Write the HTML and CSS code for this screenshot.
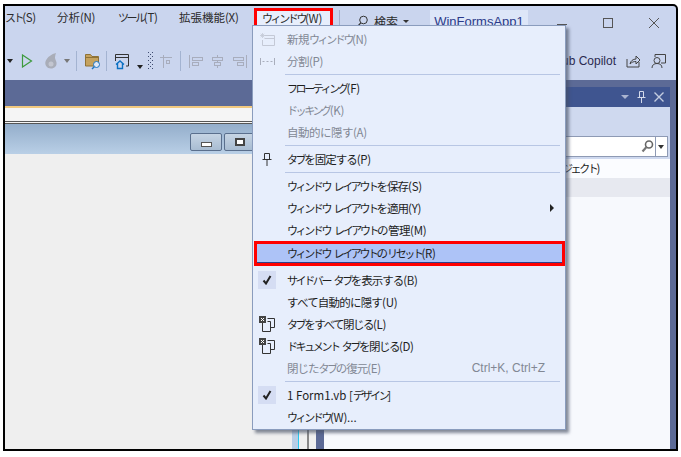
FILE: index.html
```html
<!DOCTYPE html>
<html lang="ja">
<head>
<meta charset="utf-8">
<title>ウィンドウ メニュー</title>
<link rel="stylesheet" href="styles.css">
</head>
<body>
<div class="frame">
  <div class="titlebar">
    <nav class="menubar">
      <span class="mi mi-s"><span class="k">スト</span><span class="ak">(S)</span></span>
      <span class="mi mi-n">分析<span class="ak">(N)</span></span>
      <span class="mi mi-t"><span class="k">ツール</span><span class="ak">(T)</span></span>
      <span class="mi mi-x">拡張機能<span class="ak">(X)</span></span>
      <span class="mi mi-w"><span class="k">ウィンドウ</span><span class="ak">(W)</span></span>
    </nav>
    <div class="tsep"></div>
    <div class="search">
      <svg width="13" height="13" viewBox="0 0 13 13"><circle cx="7.500" cy="5" r="3.800" fill="none" stroke="#333"/><path d="M4.800 7.800 1.500 11.500" stroke="#333" stroke-width="1.200"/></svg>
      <span>検索</span><span class="caret"></span>
    </div>
    <div class="proj">WinFormsApp1</div>
    <div class="winbtns">
      <svg width="14" height="14" viewBox="0 0 14 14"><path d="M2 8.500h10" stroke="#555"/></svg>
      <svg width="14" height="14" viewBox="0 0 14 14"><rect x="2.500" y="2.500" width="9" height="9" fill="none" stroke="#555"/></svg>
      <svg width="14" height="14" viewBox="0 0 14 14"><path d="M2 2l10 10M12 2 2 12" stroke="#555"/></svg>
    </div>
  </div>
  <div class="toolbar">
    <span class="drop d1"></span>
    <svg class="t-run" width="12" height="14" viewBox="0 0 12 14"><path d="M1.500 1v12l9-6z" fill="none" stroke="#3c9a3c" stroke-width="1.200"/></svg>
    <svg class="t-fire" width="15" height="16" viewBox="0 0 15 16"><path d="M12 0C8 1 3 4 1.500 8.500 .5 12 3 15.500 7 15.500c3.500 0 6-2.500 5.500-6-.3-2-1.500-3-1.500-5C11 3 11.500 1.500 12 0z" fill="#a9adb8"/><circle cx="7" cy="11" r="2.500" fill="#c3c6d0"/></svg>
    <span class="drop grey"></span>
    <div class="sep s1"></div>
    <svg class="t-folder" width="16" height="19" viewBox="0 0 16 19"><path d="M.5.500h5l1.500 2h6.500v9.500H.5z" fill="#c5a25e" stroke="#8f7236"/><path d="M.5 3.500h13" stroke="#8f7236"/><circle cx="11.500" cy="10.500" r="3" fill="#dfe7f5" stroke="#1b76c4"/><path d="M9.300 12.800 7 15" stroke="#1b76c4" stroke-width="1.400"/></svg>
    <div class="sep s2"></div>
    <svg class="t-home" width="15" height="16" viewBox="0 0 15 16"><path d="M.5 7V.5h13V12h-2.500M.5 3.500h13" fill="none" stroke="#333"/><path d="M1 10.500l4-3.500 4 3.500M2.500 9.500v5h5v-5" fill="none" stroke="#0c71c3" stroke-width="1.400"/></svg>
    <span class="drop under"></span>
    <svg class="grip" width="6" height="18" viewBox="0 0 6 18"><path d="M0 0h1v1H0zM4 0h1v1H4zM2 2h1v1H2zM0 4h1v1H0zM4 4h1v1H4zM2 6h1v1H2zM0 8h1v1H0zM4 8h1v1H4zM2 10h1v1H2zM0 12h1v1H0zM4 12h1v1H4zM2 14h1v1H2zM0 16h1v1H0zM4 16h1v1H4z" fill="#3f4c70"/></svg>
    <svg class="t-al" width="13" height="13" viewBox="0 0 13 13"><path d="M0 2.500h12M3.500 0v13" stroke="#a8adbd"/><rect x="6.500" y="5.500" width="3" height="3" fill="none" stroke="#a8adbd"/></svg>
    <div class="sep s3"></div>
    <svg class="t-a1" width="14" height="13" viewBox="0 0 14 13"><path d="M.5 0v13" stroke="#a8adbd"/><rect x="3.500" y="2.500" width="10" height="3" fill="none" stroke="#a8adbd"/><rect x="3.500" y="7.500" width="6" height="3" fill="none" stroke="#a8adbd"/></svg>
    <svg class="t-a2" width="12" height="13" viewBox="0 0 12 13"><path d="M5.500 0v13" stroke="#a8adbd"/><rect x=".5" y="2.500" width="10" height="3" fill="#cad5ee" stroke="#a8adbd"/><rect x="2.500" y="7.500" width="6" height="3" fill="#cad5ee" stroke="#a8adbd"/></svg>
    <svg class="t-a2" width="14" height="13" viewBox="0 0 14 13"><path d="M13.500 0v13" stroke="#a8adbd"/><rect x=".5" y="2.500" width="10" height="3" fill="none" stroke="#a8adbd"/><rect x="4.500" y="7.500" width="6" height="3" fill="none" stroke="#a8adbd"/></svg>
    <div class="tb-right">
      <span class="copilot">GitHub Copilot</span>
      <svg width="15" height="14" viewBox="0 0 15 14"><path d="M1 5v8h12V8" fill="none" stroke="#444"/><path d="M4 10c.5-3 3-5 6-5V2l4 4-4 4V7.500c-2.500 0-4 .5-6 2.500z" fill="none" stroke="#444"/></svg>
      <svg width="15" height="15" viewBox="0 0 15 15"><path d="M4 3V.5h10.500V9H10" fill="none" stroke="#444"/><circle cx="6" cy="6.500" r="3" fill="none" stroke="#444"/><path d="M1 14c0-3 2-4.500 5-4.500s5 1.500 5 4.500" fill="none" stroke="#444"/></svg>
    </div>
  </div>
  <div class="workspace">
    <div class="editor">
      <div class="doc-head"></div>
      <div class="doc-strip"></div>
      <div class="doc-tabs">
        <span class="formbtn"><i class="b-min"></i></span>
        <span class="formbtn"><i class="b-max"></i></span>
      </div>
      <div class="canvas">
        <div class="cbars"><i class="c1"></i><i class="c2"></i></div>
      </div>
    </div>
    <div class="panel">
      <div class="panel-head">
        <span class="ph-drop"></span>
        <svg width="9" height="12" viewBox="0 0 9 12"><path d="M2.500.500h4v6h-4zM.5 6.500h8M4.500 6.500V12" fill="none" stroke="#d3d9ea"/></svg>
        <svg width="10" height="10" viewBox="0 0 10 10"><path d="M.5.500l9 9M9.500.500l-9 9" stroke="#c3cce0" stroke-width="1.400"/></svg>
      </div>
      <div class="panel-tools">
        <div class="panel-search">
          <svg width="13" height="13" viewBox="0 0 13 13"><circle cx="8" cy="4.500" r="3.500" fill="none" stroke="#666" stroke-width="1.600"/><path d="M5.500 7 1.500 11.500" stroke="#777" stroke-width="2.200"/></svg>
          <span class="ps-div"></span>
          <span class="ps-drop"></span>
        </div>
      </div>
      <div class="tree-row"><span class="k">ジェクト</span>)</div>
      <div class="tree-sel"></div>
      <div class="tree-rest"></div>
    </div>
  </div>

  <div class="menu">
    <div class="row off"><span class="ic"><svg width="15" height="13" viewBox="0 0 15 13"><path d="M4.500 2.500h10v10h-12V7M4.500 5.500h10" fill="none" stroke="#c4c9d6"/><path d="M2.500 0v5M0 2.500h5M.8.800l3.400 3.400M4.200.800.8 4.200" stroke="#c4c9d6" stroke-width=".8"/></svg></span><span class="lb">新規<span class="k">ウィンドウ</span><span class="ak">(N)</span></span></div>
    <div class="row off"><span class="ic"><svg width="15" height="9" viewBox="0 0 15 9"><path d="M.5 1v7M14.500 1v7M2.500 4.500h2M6.500 4.500h2M10.500 4.500h2" stroke="#a9aebc"/></svg></span><span class="lb">分割<span class="ak">(P)</span></span></div>
    <div class="mdiv"></div>
    <div class="row"><span class="ic"></span><span class="lb"><span class="k">フローティング</span><span class="ak">(F)</span></span></div>
    <div class="row off"><span class="ic"></span><span class="lb"><span class="k">ドッキング</span><span class="ak">(K)</span></span></div>
    <div class="row off"><span class="ic"></span><span class="lb">自動的に隠す<span class="ak">(A)</span></span></div>
    <div class="mdiv"></div>
    <div class="row"><span class="ic"><svg width="10" height="13" viewBox="0 0 10 13"><path d="M2.500.500h5v6h-5zM.5 6.500h9M5 6.500V13" fill="none" stroke="#333"/></svg></span><span class="lb tight"><span class="k">タブ</span>を固定する<span class="ak">(P)</span></span></div>
    <div class="mdiv"></div>
    <div class="row"><span class="ic"></span><span class="lb tight"><span class="k">ウィンドウ</span> <span class="k">レイアウト</span>を保存<span class="ak">(S)</span></span></div>
    <div class="row"><span class="ic"></span><span class="lb tight"><span class="k">ウィンドウ</span> <span class="k">レイアウト</span>を適用<span class="ak">(Y)</span></span><span class="sub"></span></div>
    <div class="row"><span class="ic"></span><span class="lb"><span class="k">ウィンドウ</span> <span class="k">レイアウト</span>の管理<span class="ak">(M)</span></span></div>
    <div class="row hot"><span class="ic"></span><span class="lb tight"><span class="k">ウィンドウ</span> <span class="k">レイアウト</span>の<span class="k">リセット</span><span class="ak">(R)</span></span></div>
    <div class="mdiv short"></div>
    <div class="row"><span class="ic chk"><svg width="10" height="10" viewBox="0 0 10 10"><path d="M1.500 5.500 4 8.500 8.500 1" fill="none" stroke="#222" stroke-width="2"/></svg></span><span class="lb tight"><span class="k">サイドバー</span> <span class="k">タブ</span>を表示する<span class="ak">(B)</span></span></div>
    <div class="row"><span class="ic"></span><span class="lb mid">すべて自動的に隠す<span class="ak">(U)</span></span></div>
    <div class="row"><span class="ic"><svg width="16" height="16" viewBox="0 0 16 16"><rect width="7" height="7" fill="#444"/><path d="M2 2l3 3M5 2 2 5" stroke="#fff"/><path d="M8.500 2.500h7v9h-4M3.500 7v8.500h8V5.500h-3" fill="none" stroke="#333"/></svg></span><span class="lb tighter"><span class="k">タブ</span>をすべて閉じる<span class="ak">(L)</span></span></div>
    <div class="row"><span class="ic"><svg width="16" height="16" viewBox="0 0 16 16"><rect width="7" height="7" fill="#444"/><path d="M2 2l3 3M5 2 2 5" stroke="#fff"/><path d="M8.500 2.500h7v9h-4M3.500 7v8.500h8V5.500h-3" fill="none" stroke="#333"/></svg></span><span class="lb tighter"><span class="k">ドキュメント</span> <span class="k">タブ</span>を閉じる<span class="ak">(D)</span></span></div>
    <div class="row off"><span class="ic"></span><span class="lb tight">閉じた<span class="k">タブ</span>の復元<span class="ak">(E)</span></span><span class="sc">Ctrl+K, Ctrl+Z</span></div>
    <div class="mdiv"></div>
    <div class="row"><span class="ic chk"><svg width="10" height="10" viewBox="0 0 10 10"><path d="M1.500 5.500 4 8.500 8.500 1" fill="none" stroke="#222" stroke-width="2"/></svg></span><span class="lb plain">1 Form1.vb [<span class="k">デザイン</span>]</span></div>
    <div class="row"><span class="ic"></span><span class="lb plain"><span class="k">ウィンドウ</span><span class="ak">(W)</span>...</span></div>
  </div>
</div>
</body>
</html>
```

FILE: styles.css
```css
* { box-sizing: border-box; }
html, body { margin: 0; padding: 0; background: #fff; }
body { width: 681px; height: 457px; overflow: hidden; padding: 4px 0 0 3px; font-family: "Noto Sans CJK JP", "Liberation Sans", sans-serif; font-size: 12px; color: #1e1e1e; }
.frame { position: relative; width: 675px; height: 447px; border: 2px solid #000; border-top-right-radius: 5px; background: #cad5ee; display: flex; flex-direction: column; overflow: hidden; }

.k { font-size: 11px; letter-spacing: -2.4px; }
.ak { letter-spacing: -.3px; }

.titlebar { height: 36px; display: flex; align-items: flex-start; flex: none; }
.menubar { display: flex; height: 22px; align-items: center; font-size: 11.5px; color: #2a2a2a; }
.mi { white-space: nowrap; }
.mi-s { width: 52px; }
.mi-n { width: 61px; }
.mi-t { width: 61px; }
.mi-x { width: 75px; }
.mi-w { width: 79px; height: 20px; margin-top: 2px; border: 3px solid #f00; background: #e7eefc; display: flex; align-items: center; padding-left: 5px; }
.tsep { width: 1px; height: 18px; background: #a3b0cc; margin: 4px 0 0 6px; }
.search { display: flex; align-items: center; margin: 4px 0 0 16px; height: 22px; width: 74px; color: #2a2a2a; }
.search span:first-of-type { margin-left: 5px; }
.caret { width: 0; height: 0; border: 3px solid transparent; border-top: 3px solid #333; border-bottom: 0; margin-left: 5px; }
.proj { width: 98px; height: 24px; margin-top: 4px; background: #dde6f8; color: #2b3a8a; text-align: center; line-height: 24px; font-size: 13px; font-family: "Liberation Sans", sans-serif; }
.winbtns { margin-left: 27px; display: flex; gap: 32px; padding-top: 10px; }

.toolbar { height: 38px; flex: none; display: flex; align-items: center; }
.drop { width: 0; height: 0; border: 3px solid transparent; border-top: 4px solid #222; border-bottom: 0; flex: none; }
.d1 { margin-left: 2px; }
.drop.grey { border-top-color: #777; margin-left: 5px; }
.drop.under { margin-left: 7px; margin-top: 12px; }
.t-run { margin-left: 8px; }
.t-fire { margin-left: 11px; }
.sep { width: 1px; height: 20px; background: #a3b3d1; flex: none; }
.s1 { margin-left: 6px; }
.s2 { margin-left: 5px; }
.s3 { margin-left: 7px; }
.t-folder { margin: 5px 0 0 8px; }
.t-home { margin: 2px 0 0 8px; }
.grip { margin-left: 5px; }
.t-al { margin-left: 6px; }
.t-a1 { margin-left: 8px; }
.t-a2 { margin-left: 9px; }
.tb-right { margin-left: auto; display: flex; align-items: center; gap: 10px; padding-right: 10px; }
.copilot { font-family: "Liberation Sans", sans-serif; color: #2a2a50; white-space: nowrap; }

.workspace { flex: 1; background: #5c6a96; display: flex; gap: 8px; min-height: 0; }
.editor { flex: 1; display: flex; flex-direction: column; min-width: 0; }
.doc-head { height: 28px; background: #5c6a96; border-bottom: 2px solid #f2c97f; flex: none; }
.doc-strip { height: 16px; background: #f5f5f5; border-bottom: 3px double #555; flex: none; }
.doc-tabs { height: 30px; background: linear-gradient(#94aecb, #b9cfe6); display: flex; gap: 2px; padding: 9px 0 0 185px; flex: none; }
.formbtn { width: 32px; height: 18px; border: 1px solid #5a6f8d; border-radius: 2px; background: linear-gradient(#c6d4e4, #a8bcd2); display: flex; align-items: center; justify-content: center; flex: none; }
.b-min { width: 11px; height: 5px; background: #fff; border: 1px solid #555; margin-top: 5px; }
.b-max { width: 10px; height: 8px; background: #fff; border: 2px solid #444; margin-top: -1px; }
.canvas { flex: 1; background: #efefef; display: flex; justify-content: flex-end; }
.cbars { display: flex; align-items: flex-end; margin-right: 7px; }
.cbars i { display: block; height: 19px; }
.c1 { width: 7px; background: #b8cee6; border-right: 1px solid #28c8ee; margin-right: 8px; }
.c2 { width: 2px; background: #888; }

.panel { width: 346px; margin: 7px 6px 0 0; background: #f7f9fd; display: flex; flex-direction: column; flex: none; }
.panel-head { height: 20px; background: #3f5590; display: flex; align-items: center; justify-content: flex-end; gap: 8px; padding-right: 6px; flex: none; }
.ph-drop { width: 0; height: 0; border: 4px solid transparent; border-top: 4px solid #aab4d0; border-bottom: 0; }
.panel-tools { height: 52px; background: #cfd9ef; padding: 29px 2px 2px 0; flex: none; }
.panel-search { height: 21px; background: #fff; border: 1px solid #8e9ab4; display: flex; align-items: center; justify-content: flex-end; padding-right: 3px; }
.ps-div { width: 1px; height: 19px; background: #8e9ab4; margin-left: 1px; }
.ps-drop { width: 0; height: 0; border: 3px solid transparent; border-top: 4px solid #333; border-bottom: 0; margin-left: 2px; }
.tree-row { height: 19px; background: #fbfcff; padding-left: 238px; line-height: 18px; font-size: 11.5px; white-space: nowrap; flex: none; }
.tree-sel { height: 19px; background: #e7e9f0; flex: none; }
.tree-rest { flex: 1; background: #f7f9fd; }

.menu { position: absolute; left: 247px; top: 19px; width: 314px; height: 405px; background: #e7eefc; border: 1px solid #8a9cbd; box-shadow: 3px 3px 3px rgba(70,80,100,.65); padding: 2px; display: flex; flex-direction: column; font-size: 11.5px; }
.row { height: 22px; flex: none; display: flex; align-items: center; color: #1e1e1e; white-space: nowrap; }
.row.off { color: #828894; }
.ic { width: 22px; height: 22px; margin-left: 1px; flex: none; display: flex; align-items: center; justify-content: center; }
.ic.chk { background: #d5ddf3; height: 18px; width: 18px; margin-left: 3px; margin-right: 2px; }
.lb { margin-left: 9px; letter-spacing: -.5px; word-spacing: 2px; }
.lb.mid { letter-spacing: -.8px; }
.lb.tight { letter-spacing: -1px; }
.lb.tighter { letter-spacing: -1.5px; }
.lb.plain { letter-spacing: 0; word-spacing: 0; }
.sc { margin-left: auto; margin-right: 18px; font-family: "Liberation Sans", sans-serif; font-size: 12px; color: #828894; }
.sub { width: 0; height: 0; border: 4px solid transparent; border-left: 4px solid #222; border-right: 0; margin-left: auto; margin-right: 9px; }
.mdiv { height: 1px; background: #b8c6e4; margin: 2px 3px 2px 30px; flex: none; }
.mdiv.short { background: none; margin: 1px 0; }
.row.hot { height: 25px; margin: 0 -2px 0 -1px; border: 3px solid #f00; background: #adc3f7; box-shadow: inset 0 -1px 0 #2d3f8a; padding-bottom: 1px; }
.row.hot .ic { margin-left: -1px; height: 18px; }
```
